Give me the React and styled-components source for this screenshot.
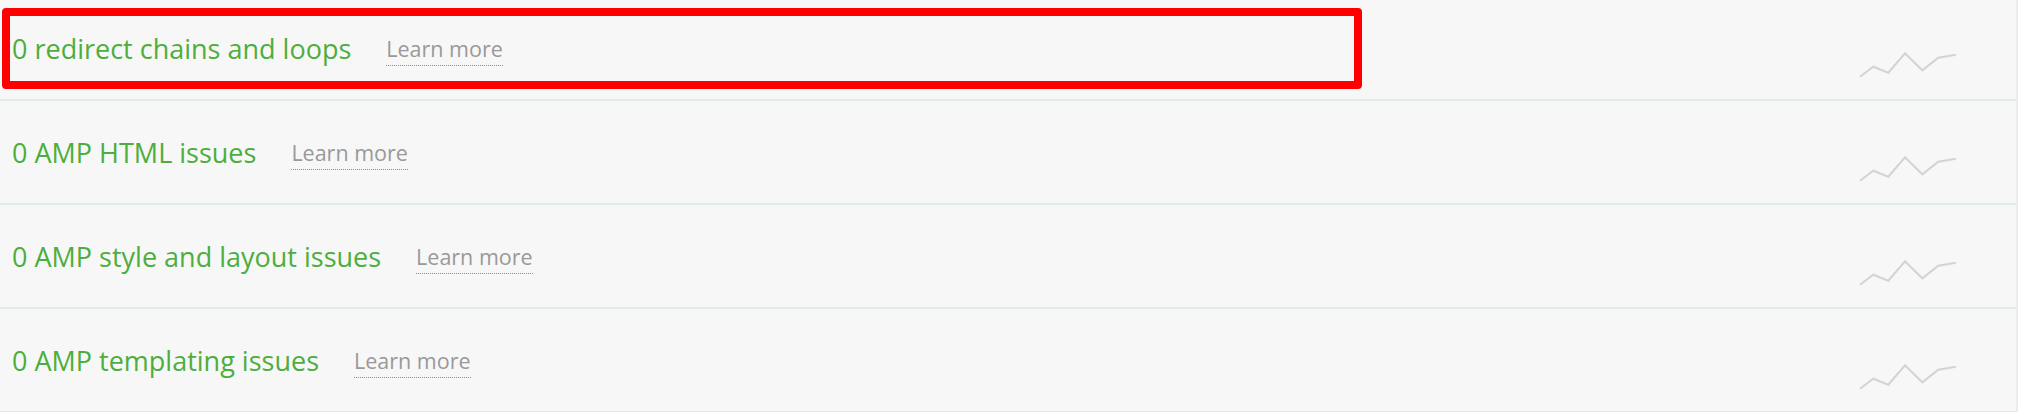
import React from "react";
import styled, { createGlobalStyle } from "styled-components";

const GlobalStyle = createGlobalStyle`
  html, body {
    margin: 0;
    padding: 0;
    background: #f7f7f7;
    font-family: "Open Sans", "Noto Sans", sans-serif;
    overflow: hidden;
  }
`;

const List = styled.div`
  margin-top: -3px;
  border-right: 2px solid #ececec;
  background: #f7f7f7;
`;

const Row = styled.div`
  position: relative;
  display: flex;
  align-items: center;
  height: 102px;
  padding: 0 59px 0 12px;
  border-bottom: 2px solid #e0eaed;
`;

const Title = styled.span`
  font-size: 27px;
  color: #4dae3c;
  white-space: nowrap;
`;

const LearnMore = styled.a`
  display: inline-block;
  margin-left: 35px;
  margin-top: 4px;
  padding-bottom: 2px;
  font-size: 21.5px;
  line-height: 28px;
  color: #999999;
  text-decoration: none;
  border-bottom: 1px dotted #8c8c8c;
  white-space: nowrap;
  cursor: pointer;
`;

const Chart = styled.svg`
  margin-left: auto;
  margin-top: 36px;
  width: 98px;
  height: 28px;
  flex: none;
`;

const Highlight = styled.div`
  position: absolute;
  left: 2px;
  top: 11px;
  width: 1360px;
  height: 81px;
  box-sizing: border-box;
  border: 8px solid #ff0000;
  border-radius: 4px;
  pointer-events: none;
`;

const Sparkline = () => (
  <Chart viewBox="0 0 98 28">
    <polyline
      points="1,24.7 14.3,14.7 29.3,20.7 46,1.3 63.3,18.3 79.3,5.7 96.7,2.7"
      fill="none"
      stroke="#d3d3d3"
      strokeWidth="2"
      strokeLinejoin="miter"
    />
  </Chart>
);

const items = [
  { title: "0 redirect chains and loops", highlighted: true },
  { title: "0 AMP HTML issues" },
  { title: "0 AMP style and layout issues" },
  { title: "0 AMP templating issues" },
];

export default function App() {
  return (
    <>
      <GlobalStyle />
      <List>
        {items.map((item) => (
          <Row key={item.title}>
            <Title>{item.title}</Title>
            <LearnMore>Learn more</LearnMore>
            <Sparkline />
            {item.highlighted && <Highlight />}
          </Row>
        ))}
      </List>
    </>
  );
}
